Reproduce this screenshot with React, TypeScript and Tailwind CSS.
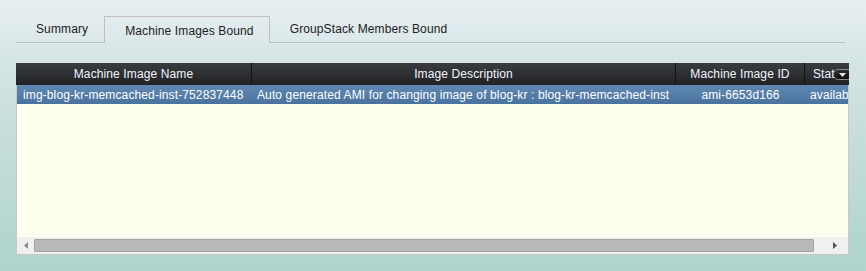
import React from "react";

export default function App() {
  const font = { fontFamily: '"Liberation Sans", Arial, sans-serif' };
  return (
    <div
      className="w-[866px] h-[271px] overflow-hidden pt-4 pl-4 bg-[linear-gradient(to_bottom,#e9eff3_0%,#d3e4e3_25%,#b3d5cf_90%,#b2d4ce_100%)] text-[12px] tracking-[0.12px] text-[#222]"
      style={font}
    >
      {/* Tabs */}
      <div className="flex w-[829px] h-[27px]">
        <div className="h-full flex items-center pl-5 pr-[16px] border-b border-[#c0c0c0] pb-px">
          Summary
        </div>
        <div className="h-full flex items-center pl-5 pr-[15px] border-x border-t border-[#c0c0c0] pt-px">
          Machine Images Bound
        </div>
        <div className="h-full flex items-center pl-5 pr-4 border-b border-[#c0c0c0] pb-px">
          GroupStack Members Bound
        </div>
        <div className="flex-1 h-full border-b border-[#c0c0c0]" />
      </div>

      {/* Grid */}
      <div className="relative mt-5 w-[833px] overflow-hidden">
        {/* Header */}
        <div className="relative flex h-[22px] bg-[linear-gradient(to_bottom,#3a3d40,#202224)] text-[#f2f4ff] overflow-hidden whitespace-nowrap">
          <div className="w-[236px] shrink-0 flex items-center justify-center border-r border-[#141414]">
            Machine Image Name
          </div>
          <div className="w-[424px] shrink-0 flex items-center justify-center border-r border-[#141414]">
            Image Description
          </div>
          <div className="w-[129px] shrink-0 flex items-center justify-center border-r border-[#141414]">
            Machine Image ID
          </div>
          <div className="w-[100px] shrink-0 flex items-center pl-[8px]">Status</div>
          <div className="absolute left-[817px] top-[6px] w-[20px] h-[11px] rounded-full border border-[#8d8d8d] bg-[linear-gradient(to_bottom,#303030,#0e0e0e)] flex items-center pl-[5px]">
            <svg width="7" height="4" viewBox="0 0 7 4">
              <path d="M0 0 L7 0 L3.5 4 Z" fill="#e8e8e8" />
            </svg>
          </div>
        </div>

        {/* Body + scrollbar */}
        <div className="border-x border-b border-[#c9c9c9]">
          <div className="h-[152px] bg-[#fffff0] overflow-hidden">
            <div className="flex h-[19px] bg-[linear-gradient(to_bottom,#5f88b2,#4a729f)] text-white whitespace-nowrap">
              <div className="w-[235px] shrink-0 flex items-center pl-[6px] overflow-hidden">
                img-blog-kr-memcached-inst-752837448
              </div>
              <div className="w-[424px] shrink-0 flex items-center pl-[5px] overflow-hidden">
                Auto generated AMI for changing image of blog-kr : blog-kr-memcached-inst
              </div>
              <div className="w-[129px] shrink-0 flex items-center justify-center overflow-hidden">
                ami-6653d166
              </div>
              <div className="w-[100px] shrink-0 flex items-center pl-[5px]">available</div>
            </div>
          </div>
          {/* Horizontal scrollbar */}
          <div className="flex items-center h-[17px] bg-[#f0f0f0]">
            <div className="w-[17px] h-full flex items-center justify-center">
              <svg width="4" height="7" viewBox="0 0 4 7">
                <path d="M4 0 L4 7 L0 3.5 Z" fill="#8a8a8a" />
              </svg>
            </div>
            <div className="w-[780px] h-[13px] bg-[#b9b9b9] border border-[#a5a5a5] rounded-[1px]" />
            <div className="flex-1" />
            <div className="w-[17px] h-full flex items-center justify-start pl-[6px] mr-[4px]">
              <svg width="4" height="7" viewBox="0 0 4 7">
                <path d="M0 0 L0 7 L4 3.5 Z" fill="#555" />
              </svg>
            </div>
          </div>
        </div>
      </div>
    </div>
  );
}
